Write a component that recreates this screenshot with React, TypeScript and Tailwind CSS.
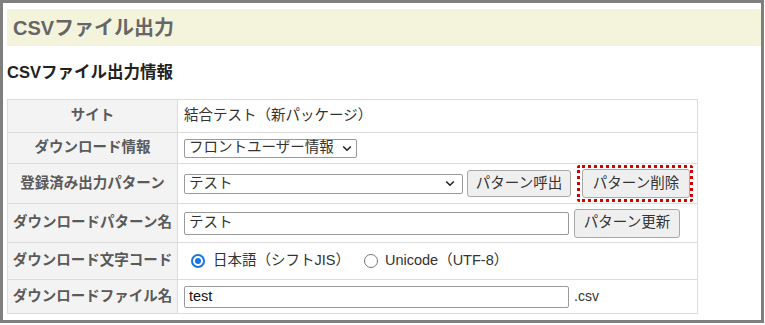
import React from "react";

const font = { fontFamily: '"Liberation Sans", "Noto Sans CJK JP", sans-serif' };

function Chevron() {
  return (
    <svg width="10" height="7" viewBox="0 0 10 7" className="shrink-0">
      <path d="M1.2 1.5 L5 5.2 L8.8 1.5" fill="none" stroke="#222" strokeWidth="1.6" />
    </svg>
  );
}

function Btn({ children, className = "" }: { children: React.ReactNode; className?: string }) {
  return (
    <div
      className={
        "flex items-center justify-center bg-[#efefef] border border-[#a9a9a9] rounded-[3px] text-[14.5px] text-[#333] " +
        className
      }
    >
      {children}
    </div>
  );
}

function Row({
  label,
  h,
  last,
  children,
}: {
  label: string;
  h: string;
  last?: boolean;
  children: React.ReactNode;
}) {
  return (
    <div className={"flex " + h + (last ? "" : " border-b border-[#dcdcdc]")}>
      <div className="w-[170px] shrink-0 bg-[#f3f3f3] border-r border-[#dcdcdc] flex items-center justify-center font-bold text-[14.5px] text-[#5a5a5a]">
        {label}
      </div>
      <div className="flex-1 flex items-center pl-[6px] text-[14.5px] text-[#333]">{children}</div>
    </div>
  );
}

export default function App() {
  return (
    <div className="w-[765px] h-[325px] bg-white" style={font}>
      <div className="w-[764px] h-[323px] border-[3px] border-[#7f7f7f] pt-[6px] pl-[4px]">
        <div className="h-[37px] bg-[#f4f4dd] flex items-center pl-[6px]">
          <span className="text-[20px] font-bold text-[#666]">CSVファイル出力</span>
        </div>
        <div className="mt-[14px] h-[24px] flex items-center text-[16.5px] font-bold text-[#222]">
          CSVファイル出力情報
        </div>
        <div className="mt-[15px] w-[691px] border border-[#dcdcdc]">
          <Row label="サイト" h="h-[33px]">
            結合テスト（新パッケージ）
          </Row>
          <Row label="ダウンロード情報" h="h-[31px]">
            <div className="h-[19px] w-[173px] border border-[#9a9a9a] rounded-[2px] flex items-center justify-between pl-[4px] pr-[4px]">
              <span>フロントユーザー情報</span>
              <Chevron />
            </div>
          </Row>
          <Row label="登録済み出力パターン" h="h-[40px]">
            <div className="h-[20px] w-[279px] border border-[#9a9a9a] rounded-[2px] flex items-center justify-between pl-[4px] pr-[7px]">
              <span>テスト</span>
              <Chevron />
            </div>
            <Btn className="ml-[4px] h-[27px] w-[104px]">パターン呼出</Btn>
            <div className="ml-[6px] border-[3px] border-dotted border-[#d40000] rounded-[3px] pl-[2px] pr-[0px] py-[1px]">
              <Btn className="h-[29px] w-[108px]">パターン削除</Btn>
            </div>
          </Row>
          <Row label="ダウンロードパターン名" h="h-[39px]">
            <div className="h-[23px] w-[385px] border border-[#9a9a9a] rounded-[2px] flex items-center pl-[4px]">
              テスト
            </div>
            <Btn className="ml-[5px] h-[29px] w-[106px]">パターン更新</Btn>
          </Row>
          <Row label="ダウンロード文字コード" h="h-[37px]">
            <div className="ml-[7px] w-[14px] h-[14px] rounded-full border-[2px] border-[#1a73e8] flex items-center justify-center">
              <div className="w-[6px] h-[6px] rounded-full bg-[#1a73e8]" />
            </div>
            <span className="ml-[8px]">日本語（シフトJIS）</span>
            <div className="ml-[14px] w-[14px] h-[14px] rounded-full border border-[#767676]" />
            <span className="ml-[7px]">Unicode（UTF-8）</span>
          </Row>
          <Row label="ダウンロードファイル名" h="h-[33px]" last>
            <div className="h-[22px] w-[385px] border border-[#9a9a9a] rounded-[2px] flex items-center pl-[4px] text-[#111]">
              test
            </div>
            <span className="ml-[5px] text-[14px]">.csv</span>
          </Row>
        </div>
      </div>
    </div>
  );
}
